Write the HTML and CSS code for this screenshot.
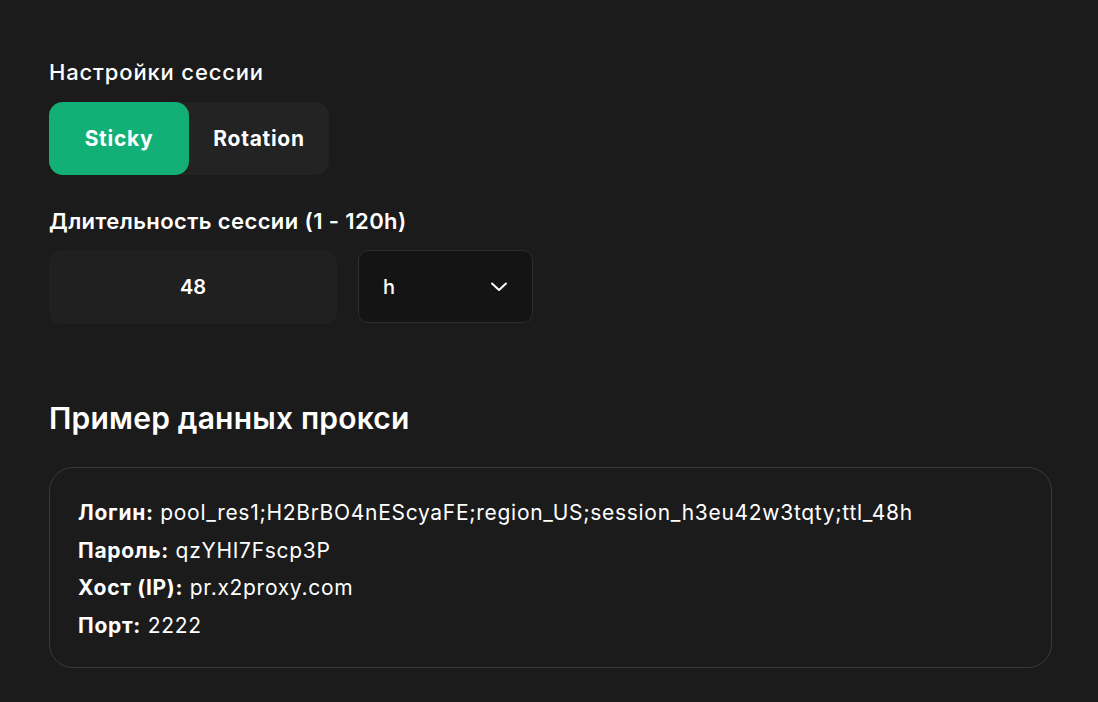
FILE: index.html
```html
<!DOCTYPE html>
<html lang="ru">
<head>
<meta charset="utf-8">
<link rel="stylesheet" href="styles.css">
</head>
<body>
<main class="page">
  <div class="label">Настройки сессии</div>
  <div class="toggle">
    <button class="toggle-btn active">Sticky</button>
    <button class="toggle-btn">Rotation</button>
  </div>
  <div class="label label-strong">Длительность сессии (1 - 120h)</div>
  <div class="duration-row">
    <div class="num-input">48</div>
    <div class="select">
      <span>h</span>
      <svg class="chev" width="18" height="10" viewBox="0 0 18 10"><path d="M2 1.5 L9 8 L16 1.5" fill="none" stroke="#ffffff" stroke-width="2" stroke-linecap="round" stroke-linejoin="round"/></svg>
    </div>
  </div>
  <h2 class="heading">Пример данных прокси</h2>
  <div class="card">
    <div class="row"><b>Логин:</b> pool_res1;H2BrBO4nEScyaFE;region_US;session_h3eu42w3tqty;ttl_48h</div>
    <div class="row"><b>Пароль:</b> qzYHI7Fscp3P</div>
    <div class="row"><b>Хост (IP):</b> pr.x2proxy.com</div>
    <div class="row"><b>Порт:</b> 2222</div>
  </div>
</main>
</body>
</html>
```

FILE: styles.css
```css
html, body {
  margin: 0;
  padding: 0;
  background: #1b1b1b;
  color: #ffffff;
  font-family: Inter, "Noto Sans", sans-serif;
}
.page {
  padding: 57px 46px 0 49px;
  display: flex;
  flex-direction: column;
  align-items: flex-start;
}
.label {
  font-size: 22px;
  font-weight: 500;
  line-height: 30px;
  letter-spacing: 0.85px;
}
.label-strong {
  font-size: 22px;
  font-weight: 600;
  letter-spacing: 0.4px;
  margin-top: 31px;
}
.toggle {
  margin-top: 15px;
  display: flex;
  background: #232323;
  border-radius: 14px;
}
.toggle-btn {
  width: 140px;
  height: 73px;
  border: none;
  border-radius: 14px;
  background: transparent;
  color: #ffffff;
  font-family: inherit;
  font-size: 21px;
  font-weight: 700;
  letter-spacing: 0.7px;
  padding: 0;
}
.toggle-btn.active {
  background: #12b076;
}
.duration-row {
  margin-top: 14px;
  display: flex;
  gap: 21px;
}
.num-input {
  width: 288px;
  height: 74px;
  border-radius: 12px;
  background: #202020;
  display: flex;
  align-items: center;
  justify-content: center;
  font-size: 20px;
  font-weight: 600;
}
.select {
  box-sizing: border-box;
  width: 175px;
  height: 73px;
  border: 1px solid #2e2e2e;
  border-radius: 10px;
  background: #141414;
  display: flex;
  align-items: center;
  justify-content: space-between;
  padding: 0 24px 0 24px;
  font-size: 20px;
  font-weight: 500;
}
.chev { display: block; }
.heading {
  margin: 74px 0 0 0;
  font-size: 30px;
  font-weight: 600;
  line-height: 40px;
  letter-spacing: 0.2px;
}
.card {
  margin-top: 29px;
  box-sizing: border-box;
  width: 1003px;
  border: 1px solid #3a3a3a;
  border-radius: 24px;
  padding: 26px 28px 23px 28px;
}
.row {
  font-size: 21px;
  line-height: 37.5px;
  font-weight: 400;
  letter-spacing: 0.7px;
}
.row b { font-weight: 700; }
```
